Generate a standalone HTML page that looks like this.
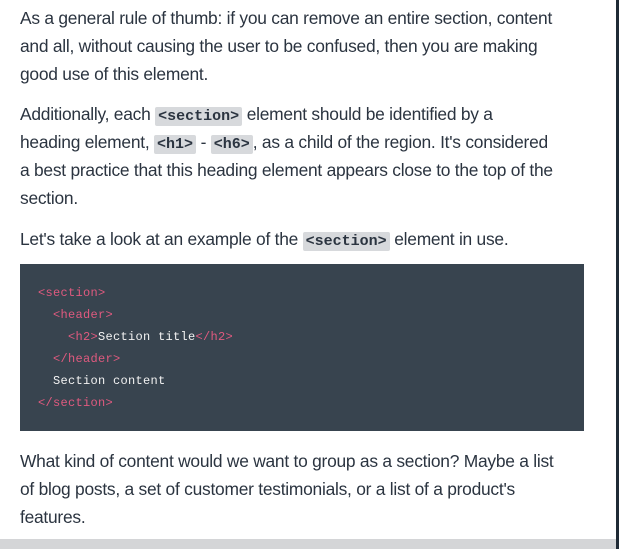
<!DOCTYPE html>
<html><head><style>
html,body{margin:0;padding:0;width:619px;height:549px;overflow:hidden;background:#fff;}
body{position:relative;font-family:"Liberation Sans",sans-serif;color:#2b3440;}
.l{position:absolute;left:20px;white-space:nowrap;font-size:17.4px;line-height:28px;letter-spacing:-0.25px;}
code{font-family:"Liberation Mono",monospace;font-size:15px;background:#d7d9dc;padding:1px 3px;border-radius:2px;font-weight:bold;color:#2b3440;letter-spacing:0;}
pre{position:absolute;left:20px;top:264px;width:528px;margin:0;background:#38444f;color:#f2f2f2;font-family:"Liberation Mono",monospace;font-size:12px;line-height:22px;padding:18px;height:131px;letter-spacing:0.3px;}
.t{color:#e05a7f;}
.rb{position:absolute;right:0;top:0;width:3px;height:549px;background:#1f2a35;}
.bb{position:absolute;left:0;bottom:0;width:616px;height:10px;background:#d4d5d7;}
</style></head><body>
<div class="l" style="top:4px">As a general rule of thumb: if you can remove an entire section, content</div>
<div class="l" style="top:32px">and all, without causing the user to be confused, then you are making</div>
<div class="l" style="top:60px">good use of this element.</div>
<div class="l" style="top:100px">Additionally, each <code>&lt;section&gt;</code> element should be identified by a</div>
<div class="l" style="top:128px">heading element, <code>&lt;h1&gt;</code> - <code>&lt;h6&gt;</code>, as a child of the region. It's considered</div>
<div class="l" style="top:156px">a best practice that this heading element appears close to the top of the</div>
<div class="l" style="top:184px">section.</div>
<div class="l" style="top:225px">Let's take a look at an example of the <code>&lt;section&gt;</code> element in use.</div>
<pre><span class="t">&lt;section&gt;</span>
  <span class="t">&lt;header&gt;</span>
    <span class="t">&lt;h2&gt;</span>Section title<span class="t">&lt;/h2&gt;</span>
  <span class="t">&lt;/header&gt;</span>
  Section content
<span class="t">&lt;/section&gt;</span></pre>
<div class="l" style="top:447px">What kind of content would we want to group as a section? Maybe a list</div>
<div class="l" style="top:475px">of blog posts, a set of customer testimonials, or a list of a product's</div>
<div class="l" style="top:503px">features.</div>
<div class="rb"></div>
<div class="bb"></div>
</body></html>
